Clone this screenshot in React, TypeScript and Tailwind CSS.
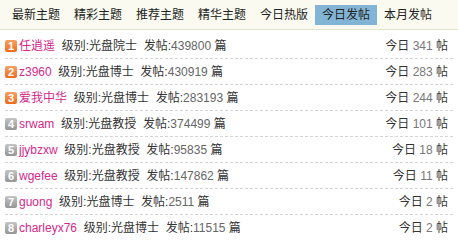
import React from "react";

const tabs = ["最新主题", "精彩主题", "推荐主题", "精华主题", "今日热版", "今日发帖", "本月发帖"];

const rows = [
  { n: 1, name: "任逍遥", level: "光盘院士", posts: "439800", today: "341" },
  { n: 2, name: "z3960", level: "光盘博士", posts: "430919", today: "283" },
  { n: 3, name: "爱我中华", level: "光盘博士", posts: "283193", today: "244" },
  { n: 4, name: "srwam", level: "光盘教授", posts: "374499", today: "101" },
  { n: 5, name: "jjybzxw", level: "光盘教授", posts: "95835", today: "18" },
  { n: 6, name: "wgefee", level: "光盘教授", posts: "147862", today: "11" },
  { n: 7, name: "guong", level: "光盘博士", posts: "2511", today: "2" },
  { n: 8, name: "charleyx76", level: "光盘博士", posts: "11515", today: "2" },
];

export default function App() {
  return (
    <div
      className="w-[458px] h-[241px] bg-white overflow-hidden text-[12px] text-[#333]"
      style={{ fontFamily: '"Liberation Sans", "Noto Sans CJK SC", sans-serif' }}
    >
      <div className="h-[30px] bg-[#fafaf0] border-b border-[#e2e5cd] flex items-center pl-[5px]">
        {tabs.map((t) => (
          <div
            key={t}
            className={
              "px-[7px] h-[20px] leading-[20px] " +
              (t === "今日发帖" ? "bg-[#82b5d5] text-[#222]" : "text-[#222]")
            }
          >
            {t}
          </div>
        ))}
      </div>
      <div className="px-[5px] pt-[3px]">
        {rows.map((r, i) => (
          <div
            key={r.n}
            className={
              "h-[26px] flex items-center justify-between pr-[5px] " +
              (i < rows.length - 1 ? "border-b border-dashed border-[#d4d4d4]" : "")
            }
          >
            <div className="flex items-center whitespace-pre">
              <span
                className={
                  "w-[12px] h-[12px] rounded-[2px] text-white font-bold text-[11px] leading-[12px] text-center mr-[2px] " +
                  (r.n <= 3
                    ? "bg-gradient-to-b from-[#f8a060] to-[#ee6a18]"
                    : "bg-gradient-to-b from-[#c4c4c4] to-[#959595]")
                }
              >
                {r.n}
              </span>
              <span className="text-[#d4288c] text-[12px]">{r.name}</span>
              <span>{"  级别:" + r.level + "  发帖:"}</span>
              <span className="text-[#666]">{r.posts}</span>
              <span>{" 篇"}</span>
            </div>
            <div className="whitespace-pre">
              <span>今日 </span>
              <span className="text-[#777]">{r.today}</span>
              <span> 帖</span>
            </div>
          </div>
        ))}
      </div>
    </div>
  );
}
